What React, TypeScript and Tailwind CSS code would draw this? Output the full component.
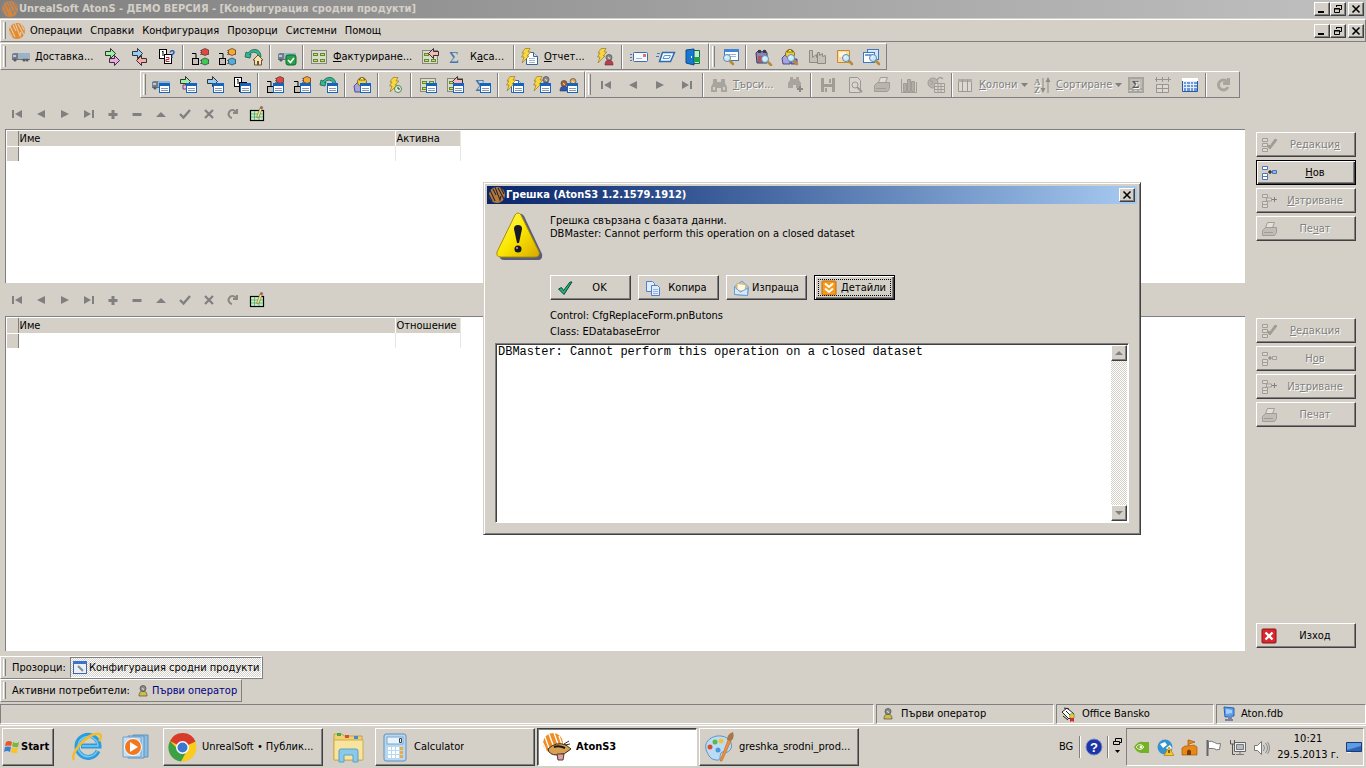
import React from 'react';
import clsx from 'clsx';

type IconProps = { w?: number; h?: number; box?: string; className?: string; children: React.ReactNode };

const RAISED = 'border border-t-white border-l-white border-r-[#404040] border-b-[#404040] shadow-[inset_-1px_-1px_0_#808080]';
const DEFAULT_BUTTON = 'border border-black shadow-[inset_1px_1px_0_#fff,inset_-1px_-1px_0_#404040,inset_-2px_-2px_0_#808080]';
const BAND = 'border border-t-white border-l-white border-r-[#808080] border-b-[#808080]';
const SUNKEN = 'border border-t-[#808080] border-l-[#808080] border-r-white border-b-white';
const DISABLED = 'text-[#808080] [text-shadow:1px_1px_0_#fff]';
const CHECKER = 'bg-[repeating-conic-gradient(#fff_0_25%,#d4d0c8_0_50%)] bg-[length:2px_2px]';

function Icon({ w = 20, h = 18, box, className, children }: IconProps) {
  return (
    <svg width={w} height={h} viewBox={box ?? `0 0 ${w} ${h}`} className={clsx('shrink-0', className)} aria-hidden="true">
      {children}
    </svg>
  );
}

/* ---------- icon parts, all on a 20x18 canvas ---------- */

const WinBadge = () => (
  <g>
    <rect x="8.5" y="7.5" width="10" height="9" fill="#fff" stroke="#1464c0" />
    <path d="M8 7h11v3H8z" fill="#1464c0" />
    <path d="M10 12.500h7M10 14.500h7" stroke="#8898b0" />
  </g>
);

const Truck = () => (
  <g>
    <rect x="7" y="4" width="12" height="7" fill="#9fb2c4" />
    <path d="M7 4.500h12" stroke="#c3d2de" />
    <path d="M1 6l2-1h4v6H1z" fill="#72808e" />
    <path d="M2 7h3v2H2z" fill="#b9c8d6" />
    <path d="M1 11.500h18" stroke="#68727c" />
    <circle cx="4" cy="12" r="1.600" fill="#555d66" />
    <circle cx="16" cy="12" r="1.600" fill="#555d66" />
    <circle cx="13" cy="12" r="1.600" fill="#555d66" />
  </g>
);

const ArrowR = ({ x, y, fill }: { x: number; y: number; fill: string }) => (
  <path transform={`translate(${x} ${y})`} d="M.5 3.500h5v-3l5 5-5 5v-3h-5z" fill={fill} stroke="#222" strokeWidth=".9" />
);

const ArrowL = ({ x, y, fill }: { x: number; y: number; fill: string }) => (
  <path transform={`translate(${x} ${y})`} d="M10.500 3.500h-5v-3l-5 5 5 5v-3h5z" fill={fill} stroke="#222" strokeWidth=".9" />
);

const Pages = () => (
  <g fill="#fff" stroke="#000">
    <rect x="2.500" y="1.500" width="7" height="9" />
    <path d="M5 4l1-1v5" fill="none" />
    <rect x="7.500" y="6.500" width="7" height="9" />
    <path d="M9 9.500h3v2H9v2h3.500" fill="none" stroke="#c02030" />
  </g>
);

const Balls = ({ top, bottom }: { top: string; bottom?: string }) => (
  <g>
    <path d="M2 5.500h4v5" fill="none" stroke="#000" />
    <rect x="2.500" y="10.500" width="6" height="6" fill="#c4c0b8" stroke="#000" />
    <path d="M10 2.500h9M10 4.500h9M10 6.500h9" stroke="#777" />
    <path d="M11.500 2l3.500-1.500L18.500 2v4L15 7.500 11.500 6z" fill={top} stroke="#603020" strokeWidth=".7" />
    {bottom && (
      <>
        <path d="M10 12.500h9M10 15.500h9" stroke="#777" />
        <path d="M11.500 11.500L15 10l3.500 1.500v4L15 17l-3.500-1.500z" fill={bottom} stroke="#204040" strokeWidth=".7" />
      </>
    )}
  </g>
);

const Undo = () => (
  <path d="M1 9l5 1 1-4-1.500.5C8 3 14 3 15 10l2-1C17 0 8-.5 4 5L2 4z" fill="#39b394" stroke="#12634c" strokeWidth=".8" />
);

const Form = () => (
  <g>
    <rect x="2.500" y="2.500" width="15" height="13" fill="#d9dcc8" stroke="#88887c" />
    <path d="M4 5h5v3H4zM11 5h5v3h-5zM4 11h5v3H4zM11 11h5v3h-5z" fill="#5a8a3c" />
    <path d="M5 6h3v1H5zM12 6h3v1h-3zM5 12h3v1H5zM12 12h3v1h-3z" fill="#e3d84c" />
  </g>
);

const Sigma = () => (
  <text x="3" y="15" fontSize="17" fontFamily="Liberation Serif, serif" fill="#3f78ac">Σ</text>
);

const Bolt = ({ x = 0, y = 0 }: { x?: number; y?: number }) => (
  <path transform={`translate(${x} ${y})`} d="M5 .5h5L8 4h3L7 8h2L2 15l2-6H1.500L4 5H2z" fill="#f7d83c" stroke="#9b7b2c" strokeWidth=".7" />
);

const Doc = () => (
  <g>
    <path d="M6.500 4.500h7l4 4v8h-11z" fill="#fff" stroke="#3c6492" />
    <path d="M13.500 4.500v4h4" fill="#cfe0f2" stroke="#3c6492" />
    <path d="M9 10.500h6M9 12.500h6M9 14.500h6" stroke="#9ab4d2" />
  </g>
);

const Person = ({ x = 0, y = 0, head = '#8b8b8b', body = '#c03a4c' }: { x?: number; y?: number; head?: string; body?: string }) => (
  <g transform={`translate(${x} ${y})`}>
    <path d="M0 11c0-4 2-5 4-5s4 1 4 5z" fill={body} stroke="#50303a" strokeWidth=".6" />
    <circle cx="4" cy="3.500" r="3" fill={head} stroke="#4a4a4a" strokeWidth=".7" />
    <path d="M3 3.500l2 1" stroke="#eee" />
  </g>
);

const Lens = ({ x = 8, y = 6 }: { x?: number; y?: number }) => (
  <g transform={`translate(${x} ${y})`}>
    <path d="M6 6l4 4" stroke="#b98a3c" strokeWidth="2.600" strokeLinecap="round" />
    <circle cx="4" cy="4" r="3.500" fill="#cdeafa" stroke="#5b8cb0" />
    <path d="M2.500 3.500l1.500-1" stroke="#fff" />
  </g>
);

const Drum = () => (
  <g stroke="#35307c" strokeWidth=".8">
    <path d="M2 10l4-4 4 3v7H3z" fill="#a9a4e0" />
    <circle cx="10" cy="6" r="4.500" fill="#f4d03a" stroke="#6d5410" />
    <path d="M7 4l3-3 3 3z" fill="#fff36a" stroke="#6d5410" />
    <path d="M11 11h6v5h-6z" fill="#8c88c6" />
  </g>
);

const ICONS: Record<string, React.ReactNode> = {
  truck: <Truck />,
  arrowsOut: <><ArrowR x={2} y={0} fill="#9cf0a4" /><ArrowR x={6} y={7} fill="#f0a8ec" /></>,
  arrowsSwap: <><ArrowR x={2} y={0} fill="#98ccf4" /><ArrowL x={6} y={7} fill="#f8aaaa" /></>,
  pagesAsk: <><Pages /><text x="12" y="10" fontSize="10" fontWeight="bold" fontFamily="Liberation Sans, sans-serif" fill="#1c4fa0">?</text></>,
  ballsRed: <Balls top="#e04848" bottom="#40c850" />,
  ballsOrange: <Balls top="#f4a830" bottom="#58a8e0" />,
  undoHome: <><Undo /><path d="M9 12l5-5 5 5h-1.500v5h-7v-5z" fill="#f6e2b0" stroke="#6c5230" /><path d="M13 13h2v4h-2z" fill="#6c5230" /></>,
  truckOk: <><Truck /><rect x="9" y="7" width="10" height="10" rx="2" fill="#27a049" stroke="#0b6c2a" /><path d="M11 12l2.500 2.500L17 10" fill="none" stroke="#fff" strokeWidth="1.600" /></>,
  form: <Form />,
  formBack: <><Form /><ArrowL x={8} y={0} fill="#f8b8b8" /></>,
  sigma: <Sigma />,
  boltDoc: <><Doc /><Bolt /></>,
  boltPerson: <><Bolt /><Person x={9} y={6} /></>,
  card: <><rect x="4.500" y="4.500" width="14" height="9" rx="1" fill="#f6faff" stroke="#3c6ca8" /><path d="M7 10.500h6" stroke="#a0b4cc" /><path d="M14 6h3v3h-3z" fill="#e07070" /><path d="M1 6.500h2M1 9.500h2M1 12.500h2" stroke="#5878a0" /></>,
  card2: <><path d="M6.500 4.500h12l-4 9h-11z" fill="#f6faff" stroke="#2c6cae" strokeWidth="1.500" /><path d="M8.500 7.500h6l-1.500 3H7z" fill="none" stroke="#5a96d0" /><path d="M1 5.500h3M0 8.500h3" stroke="#5878a0" /></>,
  door: <><path d="M8.500 2.500h8v13h-8z" fill="#bfeec8" stroke="#146c54" /><path d="M3 2l8-1v16l-8-2z" fill="#1878d0" stroke="#0c4a8c" /><path d="M11 9h6v5h-6z" fill="#22a048" /><path d="M8.500 8v2" stroke="#fff" /></>,
  winLens: <><rect x="4.500" y="1.500" width="14" height="11" fill="#fff" stroke="#3c74b8" /><path d="M4 1h15v3H4z" fill="#3f86d8" /><path d="M7 6.500h9M7 8.500h9" stroke="#9ab4d2" /><Lens x={3} y={6} /></>,
  bagLens: <><path d="M3 5l3-3 3 2 3-2 2 3v10H4z" fill="#8a86b4" stroke="#3a3860" /><path d="M5 2h3v3H5zM10 2h3v3h-3z" fill="#3c3c48" /><path d="M5 8h4v6H5z" fill="#b6545c" /><Lens x={8} y={7} /></>,
  drumLens: <><Drum /><Lens x={7} y={6} /></>,
  factory: <g fill="#c4c0b8" stroke="#8c8a84"><path d="M2.500 14.500v-12h3v7l4-3v3l4-3v8z" /><path d="M10.500 4.500h2v3l3-2v3l3-1v8h-8z" /></g>,
  docLens: <><path d="M3.500 2.500h12v12h-12z" fill="#fbd9a0" stroke="#c88830" /><path d="M5 4h7v5H5z" fill="#fff4dc" /><Lens x={8} y={6} /></>,
  copyLens: <><rect x="6.500" y="1.500" width="11" height="10" fill="#d8e8fa" stroke="#3c78c0" /><rect x="2.500" y="4.500" width="11" height="10" fill="#fff" stroke="#3c78c0" /><path d="M4 6h8v2H4z" fill="#6aa2e0" /><Lens x={8} y={6} /></>,
  wTruck: <><Truck /><WinBadge /></>,
  wArrow: <><ArrowR x={2} y={0} fill="#9cf0a4" /><path d="M5 9h4v4H5z" fill="#f0b8e8" stroke="#704070" /><WinBadge /></>,
  wArrow2: <><ArrowR x={2} y={0} fill="#98ccf4" /><WinBadge /></>,
  wPages: <><Pages /><WinBadge /></>,
  wRed: <><Balls top="#e04848" /><WinBadge /></>,
  wOrange: <><Balls top="#f4a830" /><WinBadge /></>,
  wUndo: <><Undo /><WinBadge /></>,
  wDrum: <><Drum /><WinBadge /></>,
  boltClock: <><Bolt x={3} y={1} /><circle cx="13" cy="13" r="3.500" fill="#dff0d8" stroke="#4f8a58" /><path d="M13 11v2h2" fill="none" stroke="#333" /></>,
  wForm: <><Form /><WinBadge /></>,
  wFormBack: <><Form /><ArrowL x={7} y={0} fill="#f8b8b8" /><WinBadge /></>,
  wSigma: <><Sigma /><WinBadge /></>,
  wBoltDoc: <><Doc /><Bolt /><WinBadge /></>,
  wBoltPerson: <><Bolt /><Person x={10} y={0} /><WinBadge /></>,
  wPeople: <><Person x={1} y={4} head="#a8602c" body="#2858b8" /><Person x={10} y={2} head="#e8a848" body="#c88838" /><WinBadge /></>,
  first: <path d="M5 5h2v8H5zM15 5v8L8 9z" fill="#808080" />,
  prev: <path d="M14 5v8L6 9z" fill="#808080" />,
  next: <path d="M6 5v8l8-4z" fill="#808080" />,
  last: <path d="M5 5v8l7-4zM13 5h2v8h-2z" fill="#808080" />,
  find: <g fill="#a8a59e"><path d="M4 3h4v3h4V3h4v4l2 4v5h-6v-4H8v4H2v-5l2-4z" /><path d="M4 11h2v3H4zM14 11h2v3h-2z" fill="#d4d0c8" /></g>,
  findMore: <g fill="#a8a59e"><path d="M5 1h3v2h3V1h3v3l2 3v5h-5V9H8v3H3V7l2-3z" /><path d="M14 10h2v2h2v2h-2v2h-2v-2h-2v-2h2z" fill="#8c8a84" /></g>,
  save: <g><path d="M3 2h14v14H3z" fill="#a09d96" /><path d="M6 2h8v6H6zM6 11h8v5H6z" fill="#d4d0c8" /><path d="M11 3h2v4h-2zM7 12h2v4H7z" fill="#a09d96" /></g>,
  preview: <g fill="#d8d5ce" stroke="#9c9992"><path d="M4.500 1.500h8l3 3v12h-11z" /><circle cx="10" cy="9" r="3" /><path d="M12 11l5 5" strokeWidth="2" /></g>,
  print: <g fill="#b8b5ae" stroke="#a09d96"><path d="M6.500 6.500l2-5h7l-2 5z" fill="#e0ddd6" /><path d="M2.500 9.500l3-3h12v6l-2 3h-13z" /><path d="M4 12.500h10" /></g>,
  chart: <g fill="#b0ada6" stroke="#a09d96"><path d="M4.500 7.500h3v8h-3zM8.500 3.500h3v12h-3zM12.500 5.500h3v10h-3z" /><path d="M2.500 3v13.500h15V6" fill="none" /></g>,
  globe: <g fill="#b8b5ae" stroke="#a09d96"><circle cx="7" cy="7" r="5" /><path d="M4 4l3 2-2 3" fill="none" /><path d="M8.500 7.500h10v9h-10z" fill="#d8d5ce" /><path d="M8.500 10.500h10M8.500 13.500h10M12 7.500v9M15 7.500v9" /><path d="M11 4c2-3 4-3 6-1" fill="none" strokeWidth="1.500" /></g>,
  columns: <g stroke="#9c9992" fill="#dcd9d2"><path d="M3.500 3.500h13v12h-13z" /><path d="M3 3h14v3H3z" fill="#b0ada6" stroke="none" /><path d="M7.500 3.500v12M12.500 3.500v12" /></g>,
  sort: <g fill="#8c8a84"><text x="2" y="9" fontSize="9" fontWeight="bold" fontFamily="Liberation Serif, serif">A</text><text x="2" y="17" fontSize="9" fontWeight="bold" fontFamily="Liberation Serif, serif">Z</text><path d="M10.500 2h1v10h2L11 17l-2.500-5h2zM15.500 17h1V6h2L16 1l-2.500 5h2z" /></g>,
  total: <g><path d="M2 1h16v16H2z" fill="#a8a59e" /><path d="M4 3h12v9H4z" fill="#c0bdb6" /><text x="6" y="12" fontSize="11" fontWeight="bold" fontFamily="Liberation Serif, serif" fill="#555">Σ</text><path d="M3 14.500h3M8 14.500h3M13 14.500h3" stroke="#d4d0c8" /></g>,
  bands: <g fill="none" stroke="#98958e"><path d="M2 3.500h16M3.500 1v5M9.500 1v5M15.500 1v5" /><path d="M3.500 8.500h12v8h-12zM3.500 12.500h12M9.500 8.500v8" fill="#dcd9d2" /></g>,
  grid: <g><path d="M2.500 3.500h15v12h-15z" fill="#e4eefb" stroke="#2c58a0" /><path d="M2 2h16v3H2z" fill="#fff" /><path d="M4 6h2v2H4zM7 6h3v2H7zM11 6h2v2h-2zM14 6h3v2h-3zM4 9h2v2H4zM7 9h3v2H7zM11 9h2v2h-2zM14 9h3v2h-3zM4 12h2v3H4zM7 12h3v3H7zM11 12h2v3h-2zM14 12h3v3h-3z" fill="#6a98d8" /></g>,
  refresh: <path d="M14.500 6A5 5 0 1 0 15 11M15.500 2v5.500H10" fill="none" stroke="#a8a59e" strokeWidth="3" />,
  plus: <path d="M8.500 5h3v3h3v3h-3v3h-3v-3h-3V8h3z" fill="#808080" />,
  minus: <path d="M5.500 8h9v3h-9z" fill="#808080" />,
  up: <path d="M5 12l5-5 5 5z" fill="#808080" />,
  check: <path d="M5 9l3.500 3.500L15 5" fill="none" stroke="#808080" strokeWidth="2.400" />,
  cross: <path d="M6 5l8 8M14 5l-8 8" fill="none" stroke="#808080" strokeWidth="2.200" />,
  reload: <path d="M13 7a4 4 0 1 0-4 6M14 4v4h-4" fill="none" stroke="#8a8882" strokeWidth="2" />,
  editGrid: <g><rect x="3.500" y="5.500" width="13" height="10" fill="#c8f0c8" stroke="#000" strokeWidth="1.200" /><path d="M4 9h12M4 12h12M7.500 6v9M12 6v9" stroke="#4c9c5c" strokeWidth=".7" /><path d="M10 11l3-8 2 1-3 8-2 1z" fill="#f4e88c" stroke="#7c6c30" strokeWidth=".6" /><circle cx="14.500" cy="2.500" r="1.600" fill="#a06868" /></g>,
};

function Logo({ fill = '#ea8a26', lines = '#d4d0c8' }: { fill?: string; lines?: string }) {
  return (
    <Icon w={16} h={16}>
      <circle cx="8" cy="8" r="8" fill={fill} />
      <path d="M1 3l5 11M4 2l3 6M6 0l5 13 1-4M9 1l6 11M12 1l3 6M0 8l3 6" fill="none" stroke={lines} strokeWidth="1.100" />
    </Icon>
  );
}

function ToolButton({ icon, label, disabled, className }: { icon: string; label?: string; disabled?: boolean; className?: string }) {
  return (
    <button
      type="button"
      aria-label={label?.replace('&', '') ?? icon}
      disabled={disabled}
      className={clsx('flex h-6 shrink-0 items-center', className ?? 'w-[27px] justify-center', disabled && DISABLED)}
    >
      <Icon>{ICONS[icon]}</Icon>
      {label && (
        <span className="ml-1 whitespace-nowrap pt-px">
          <Accel text={label} />
        </span>
      )}
    </button>
  );
}

// "&" stands before the underlined access key
function Accel({ text }: { text: string }) {
  const i = text.indexOf('&');
  if (i < 0) return <>{text}</>;
  return (
    <>
      {text.slice(0, i)}
      <span className="underline underline-offset-1">{text[i + 1]}</span>
      {text.slice(i + 2)}
    </>
  );
}

const Sep = () => <div className="mx-0.5 h-6 w-0.5 shrink-0 border-l border-l-[#808080] border-r border-r-white" />;
const Grip = () => <div className="my-0.5 ml-0.5 mr-px w-[3px] shrink-0 self-stretch border-l border-l-white border-r border-r-[#808080]" />;
const Caret = () => <Icon w={7} h={4}><path d="M0 0h7L3.500 4z" fill="#808080" /></Icon>;

function WindowControls() {
  const button = clsx('flex h-3.5 w-4 items-center justify-center bg-[#d4d0c8]', RAISED);
  return (
    <div className="ml-auto flex">
      <button type="button" aria-label="Minimize" className={button}>
        <Icon w={10} h={10}><path d="M1 7h6v2H1z" /></Icon>
      </button>
      <button type="button" aria-label="Restore" className={button}>
        <Icon w={10} h={10}><path d="M3.500 3V1.500h5v4H7M3 1.500h6M1.500 4.500h5v4h-5zM1 5h6" fill="none" stroke="#000" /></Icon>
      </button>
      <button type="button" aria-label="Close" className={clsx(button, 'ml-0.5')}>
        <Icon w={10} h={10}><path d="M1.500 1.500l7 7M8.500 1.500l-7 7" stroke="#000" strokeWidth="1.600" /></Icon>
      </button>
    </div>
  );
}

function Navigator({ className }: { className?: string }) {
  const items = ['first', 'prev', 'next', 'last', 'plus', 'minus', 'up', 'check', 'cross', 'reload', 'editGrid'];
  return (
    <div className={clsx('flex items-center pl-[5px]', className)}>
      {items.map((name) => (
        <button key={name} type="button" aria-label={name} disabled={name !== 'editGrid'} className="flex w-6 justify-center">
          <Icon>{ICONS[name]}</Icon>
        </button>
      ))}
    </div>
  );
}

function DataGrid({ second, className }: { second: string; className?: string }) {
  return (
    <div className={clsx('ml-[5px] border-l border-t border-[#808080] bg-white pl-px pt-px', className)}>
      <table className="table-fixed border-collapse text-left leading-[14px]">
        <thead>
          <tr className="h-[15px]">
            <th aria-label="Row" className="w-[11px] border-b border-r border-b-white border-r-[#808080] bg-[#d4d0c8] p-0" />
            <th className="w-[377px] border-r border-white bg-[#d4d0c8] p-0 pl-px font-normal">Име</th>
            <th className="w-[65px] border-r border-[#e8e6e0] bg-[#d4d0c8] p-0 pl-px font-normal">{second}</th>
          </tr>
        </thead>
        <tbody>
          <tr className="h-[15px]">
            <td className="border-r border-[#808080] bg-[#d4d0c8]" />
            <td className="border-r border-[#e8e6e0]" />
            <td className="border-r border-[#e8e6e0]" />
          </tr>
        </tbody>
      </table>
    </div>
  );
}

const SIDE_ICONS: Record<string, React.ReactNode> = {
  edit: <g fill="#dcd9d2" stroke="#a09d96"><path d="M1.500 1.500h5v3h-5zM1.500 6.500h5v3h-5zM1.500 11.500h5v3h-5z" /><path d="M6 9l3 3 7-9-2-1-5 7-1-1z" fill="#a09d96" /></g>,
  add: <g fill="#fff" stroke="#4a74b4"><path d="M1.500 1.500h5v3h-5zM1.500 8.500h5v3h-5zM1.500 11.500h5v3h-5z" /><path d="M11.500 5.500h4v3h-4z" fill="#8ab4ec" /><path d="M7 7h4M9 5v4" stroke="#000" /></g>,
  addOff: <g fill="#dcd9d2" stroke="#a09d96"><path d="M1.500 1.500h5v3h-5zM1.500 8.500h5v3h-5zM1.500 11.500h5v3h-5z" /><path d="M11.500 5.500h4v3h-4z" /><path d="M7 7h4M9 5v4" stroke="#808080" /></g>,
  remove: <g fill="#dcd9d2" stroke="#a09d96"><path d="M1.500 1.500h5v3h-5zM1.500 8.500h5v3h-5zM1.500 11.500h5v3h-5z" /><path d="M5.500 5h5v3h-5z" /><path d="M11 6.500h5M13.500 4v5" stroke="#808080" /></g>,
  print: <g fill="#c0bdb6" stroke="#a09d96"><path d="M4.500 6.500l2-5h7l-2 5z" fill="#e4e1da" /><path d="M1.500 9.500l3-3h11v5l-2 3h-12z" /><path d="M3 11.500h9" /></g>,
  exit: <g><rect x="1" y="1" width="14" height="14" rx="1" fill="#d8282c" stroke="#8c1418" /><path d="M4.500 4.500l7 7M11.500 4.500l-7 7" stroke="#fff" strokeWidth="2.400" /></g>,
};

function SideButton({ icon, label, disabled, primary }: { icon: string; label: string; disabled?: boolean; primary?: boolean }) {
  return (
    <button
      type="button"
      disabled={disabled}
      className={clsx('flex h-[25px] w-[100px] items-center px-1', primary ? DEFAULT_BUTTON : RAISED, disabled && DISABLED)}
    >
      <Icon w={16} h={16}>{SIDE_ICONS[icon]}</Icon>
      <span className="flex-1 pl-0.5 pt-0.5 text-center"><Accel text={label} /></span>
    </button>
  );
}

function DialogButton({ label, primary, children }: { label: string; primary?: boolean; children: React.ReactNode }) {
  return (
    <button type="button" className={clsx('relative flex h-[25px] w-[81px] items-center px-1.5', primary ? DEFAULT_BUTTON : RAISED)}>
      <Icon w={16} h={16}>{children}</Icon>
      <span className="flex-1 pl-0.5 pt-0.5 text-center">{label}</span>
      {primary && <span className="absolute inset-[3px] border border-dotted border-black" />}
    </button>
  );
}

function ErrorDialog() {
  return (
    <div role="dialog" aria-label="Грешка" className="absolute left-[483px] top-[182px] w-[658px] border border-[#d4d0c8] border-b-[#404040] border-r-[#404040] bg-[#d4d0c8] shadow-[inset_1px_1px_0_#fff,inset_-1px_-1px_0_#808080]">
      <div className="m-[3px] flex h-[18px] items-center bg-linear-to-r from-[#0a246a] to-[#a6caf0] pl-0.5 font-bold text-white">
        <Logo lines="#20283c" fill="#b87838" />
        <span className="ml-px pt-px">Грешка (AtonS3 1.2.1579.1912)</span>
        <button type="button" aria-label="Close" className={clsx('ml-auto mr-0.5 flex h-3.5 w-4 items-center justify-center bg-[#d4d0c8]', RAISED)}>
          <Icon w={10} h={10}><path d="M1.500 1.500l7 7M8.500 1.500l-7 7" stroke="#000" strokeWidth="1.600" /></Icon>
        </button>
      </div>

      <div className="flex gap-[7px] px-3 pt-[5px]">
        <Icon w={47} h={48}>
          <defs>
            <linearGradient id="warn" x1="0" y1="0" x2="1" y2="1">
              <stop offset="0" stopColor="#fffc70" />
              <stop offset=".5" stopColor="#fbe600" />
              <stop offset="1" stopColor="#d8a800" />
            </linearGradient>
          </defs>
          <path d="M22 3q3-3 6 1l18 38q1 6-4 6H8q-5 0-4-5z" fill="#3c3c64" opacity=".8" />
          <path d="M19 3q3-4 6 0l18 37q1 5-4 5H5q-5 0-4-5z" fill="url(#warn)" stroke="#a89000" />
          <path d="M18 17q0-4 4-4t4 4l-3 14h-2z" fill="#181828" />
          <circle cx="22" cy="37" r="3.500" fill="#181828" />
          <circle cx="21" cy="36" r="1" fill="#aab" />
        </Icon>
        <div className="flex flex-col">
          <p className="mt-0.5 h-[61px] leading-[13px]">
            Грешка свързана с базата данни.
            <br />
            DBMaster: Cannot perform this operation on a closed dataset
          </p>
          <div className="flex gap-[7px]">
            <DialogButton label="OK">
              <path d="M1.500 9l3-1.500 2 3L13 2h2L7 14.500z" fill="#22b07c" stroke="#084c34" />
            </DialogButton>
            <DialogButton label="Копира">
              <g fill="#e0ecfc" stroke="#5480c4"><path d="M1.500 1.500h6l2 2v8h-8z" /><path d="M6.500 5.500h6l2 2v8h-8z" /></g>
              <path d="M8 9.500h5M8 11.500h5M8 13.500h5" stroke="#94b4e4" />
            </DialogButton>
            <DialogButton label="Изпраща">
              <path d="M1.500 6.500L9 1l6.500 6-1 8.500-13-1z" fill="#a8d0f4" stroke="#6c9cd0" />
              <path d="M4 3.500l9 1-1 7-8-1z" fill="#fff8dc" stroke="#d8b060" />
              <path d="M1.500 7l6 5 7.500-4-.5 7.500-13-1z" fill="#d4e8fa" stroke="#6c9cd0" />
            </DialogButton>
            <DialogButton label="Детайли" primary>
              <rect x="1" y="1" width="14" height="14" rx="1" fill="#f49a1c" stroke="#c46c08" />
              <path d="M4 3.500l4 3.500 4-3.500M4 8.500l4 3.500 4-3.500" fill="none" stroke="#fff" strokeWidth="2" />
            </DialogButton>
          </div>
          <p className="mt-2 leading-4">
            Control: CfgReplaceForm.pnButons
            <br />
            Class: EDatabaseError
          </p>
        </div>
      </div>

      <div className={clsx('mx-[11px] mb-[11px] mt-[3px] flex h-[180px] bg-white shadow-[inset_1px_1px_0_#404040]', SUNKEN)}>
        <textarea
          readOnly
          aria-label="Details"
          defaultValue="DBMaster: Cannot perform this operation on a closed dataset"
          className="flex-1 resize-none overflow-hidden pl-0.5 pt-px font-['Liberation_Mono',monospace] text-[12px] leading-[14px] outline-none"
        />
        <div className={clsx('my-px mr-px flex w-4 flex-col justify-between', CHECKER)}>
          <button type="button" aria-label="Scroll up" className={clsx('flex h-4 items-center justify-center bg-[#d4d0c8]', RAISED)}>
            <Icon w={8} h={4}><path d="M0 4l4-4 4 4z" fill="#808080" /></Icon>
          </button>
          <button type="button" aria-label="Scroll down" className={clsx('flex h-4 items-center justify-center bg-[#d4d0c8]', RAISED)}>
            <Icon w={8} h={4}><path d="M0 0h8L4 4z" fill="#808080" /></Icon>
          </button>
        </div>
      </div>
    </div>
  );
}

function TaskButton({ label, active, children }: { label: string; active?: boolean; children: React.ReactNode }) {
  return (
    <button
      type="button"
      className={clsx(
        'flex h-[38px] w-40 shrink-0 items-center gap-[5px] px-1',
        active ? 'border border-b-white border-l-[#404040] border-r-white border-t-[#404040] bg-white font-bold shadow-[inset_1px_1px_0_#808080]' : RAISED,
      )}
    >
      {children}
      <span className="truncate pt-px">{label}</span>
    </button>
  );
}

function Taskbar() {
  return (
    <footer className="mt-px flex h-[43px] items-center border-t border-white bg-[#d4d0c8] pl-0.5">
      <button type="button" className={clsx('flex h-[38px] w-[52px] items-center gap-px pl-px font-bold', RAISED)}>
        <Icon w={16} h={16}>
          <path d="M2 3q3-2 6 0L7 7Q4 6 1 7z" fill="#e8582c" />
          <path d="M9 3q3 2 6 0l-1 5q-3 1-6-1z" fill="#78b83c" />
          <path d="M1 8q3-1 6 0l-1 5q-3-2-6 0z" fill="#3c80d0" />
          <path d="M8 8q3 2 6 1l-1 5q-3 1-6-1z" fill="#f8c428" />
        </Icon>
        <span className="pt-px">Start</span>
      </button>
      <button type="button" aria-label="Internet Explorer" className="ml-[17px]">
        <Icon w={32} h={32}>
          <path d="M27 20a11 11 0 1 1 1-5H10" fill="none" stroke="#2c9cdc" strokeWidth="5" />
          <path d="M26 20a10 10 0 1 1 1-5H11" fill="none" stroke="#78ccf4" strokeWidth="1.500" />
          <path d="M3 29C-2 22 18 1 28 3q4 1 0 7" fill="none" stroke="#f4bc28" strokeWidth="2.500" />
        </Icon>
      </button>
      <button type="button" aria-label="Media Player" className="ml-[18px]">
        <Icon w={30} h={30}>
          <path d="M12 3h15v22H12z" fill="#8cbce0" stroke="#5c94c0" />
          <path d="M7 4h16v22H7z" fill="#a8d0ec" stroke="#5c94c0" />
          <path d="M2 5h18v20H2z" fill="#c4e0f4" stroke="#6ca0cc" />
          <circle cx="12" cy="15" r="8.500" fill="#f07820" stroke="#fff" />
          <path d="M9 10l8 5-8 5z" fill="#fff" />
        </Icon>
      </button>
      <div className="ml-3 flex items-center gap-0.5">
        <TaskButton label="UnrealSoft • Публик...">
          <Icon w={29} h={29}>
            <circle cx="14.500" cy="14.500" r="14" fill="#f8cc20" />
            <path d="M14.500 14.500L2 8A14 14 0 0 1 27.500 8.500z" fill="#d83a2c" />
            <path d="M2 8a14 14 0 0 0 11 20.500l6-11-9-1z" fill="#3ca048" />
            <circle cx="14.500" cy="14.500" r="6.500" fill="#fff" />
            <circle cx="14.500" cy="14.500" r="5" fill="#3a78d0" />
          </Icon>
        </TaskButton>
        <button type="button" aria-label="Explorer" className="mx-[7px]">
          <Icon w={34} h={32}>
            <path d="M2 3h8l2 2h18v24H2z" fill="#f0d070" stroke="#c8a040" />
            <path d="M5 2h4v3H5z" fill="#48a848" />
            <path d="M13 4h4v3h-4z" fill="#d85030" />
            <path d="M22 5h4v3h-4z" fill="#4888d0" />
            <path d="M2 9h29v20H2z" fill="#f8e49c" stroke="#d0ac50" />
            <path d="M7 31V20q0-2 2-2h15q2 0 2 2v11h-5v-7h-9v7z" fill="#8cc8e8" stroke="#58a0cc" />
          </Icon>
        </button>
        <TaskButton label="Calculator">
          <Icon w={29} h={29}>
            <rect x="4" y="1" width="22" height="27" rx="2" fill="#b8d8f0" stroke="#6090bc" />
            <rect x="7" y="4" width="16" height="7" fill="#e8f4fc" stroke="#7ca4c8" />
            <path d="M19.500 5.500h2v4h-2z" fill="none" stroke="#345" />
            <path d="M8 15.500h15M8 19.500h15M8 23.500h15" stroke="#fff" strokeWidth="3" strokeDasharray="3 1" />
            <path d="M20 15.500h3M20 19.500h3M20 23.500h3" stroke="#f0a840" strokeWidth="3" />
          </Icon>
        </TaskButton>
        <TaskButton label="AtonS3" active>
          <Icon w={29} h={30}>
            <circle cx="11" cy="11" r="10" fill="#f08c24" />
            <path d="M3 5l5 14M7 2l6 16M12 1l5 14M17 4l3 9M1 11l3 7" stroke="#fff" strokeWidth="1.300" />
            <path d="M6 17q8-8 18-4l5 4q-6 6-14 6T6 17z" fill="#d8a050" stroke="#3c2c18" />
            <path d="M12 15q5-2 11 1" fill="none" stroke="#181818" strokeWidth="2" />
            <path d="M22 12l5-3M23 13l5-1" stroke="#333" />
            <path d="M15 22l1 6h5l1-6z" fill="#e0a0a0" stroke="#503838" />
          </Icon>
        </TaskButton>
        <TaskButton label="greshka_srodni_prod...">
          <Icon w={30} h={30}>
            <path d="M3 20C-2 10 8 3 17 4s13 9 9 14-7 0-9 3 1 8-5 7-7-4-9-8z" fill="#bcdcf4" stroke="#5c94c4" />
            <circle cx="6" cy="15" r="2.500" fill="#e04838" />
            <circle cx="11" cy="10" r="2.500" fill="#58b848" />
            <circle cx="17" cy="9" r="2.500" fill="#f4c038" />
            <circle cx="14" cy="18" r="2.500" fill="#4c98dc" />
            <path d="M16 29l8-21 3 1-9 20z" fill="#f09038" stroke="#b86820" strokeWidth=".6" />
            <path d="M23 8q0-6 6-8 2 6-2 9z" fill="#a87848" />
          </Icon>
        </TaskButton>
      </div>

      <div className="ml-auto flex items-center">
        <span>BG</span>
        <div className="ml-1.5 h-[22px] w-0.5 border-l border-l-[#808080] border-r border-r-white" />
        <button type="button" aria-label="Help" className="ml-1">
          <Icon w={18} h={18}>
            <circle cx="9" cy="9" r="8" fill="#1c34a8" stroke="#7c8cc8" />
            <text x="5" y="14" fontSize="13" fontWeight="bold" fontFamily="Liberation Sans, sans-serif" fill="#fff">?</text>
          </Icon>
        </button>
        <div className="ml-1 h-[22px] w-0.5 border-l border-l-[#808080] border-r border-r-white" />
        <Icon w={9} h={18} className="mx-1">
          <path d="M2.500 3V.5h6v4H7M.5 3.500h6v3h-6z" fill="none" stroke="#000" />
          <path d="M2 12h5l-2.500 3z" />
        </Icon>
        <div className={clsx('mr-0.5 flex h-[38px] items-center gap-[7px] pl-1.5 pr-px', SUNKEN)}>
          <Icon w={17} h={17}>
            <path d="M1 8q4-6 9-5h6v11H8q-5-1-7-6z" fill="#76b028" />
            <path d="M3 8q4-5 8 0-4 5-8 0z" fill="none" stroke="#e0f0c0" />
            <circle cx="8" cy="8" r="1.500" fill="#fff" />
          </Icon>
          <Icon w={17} h={17}>
            <circle cx="8" cy="8" r="7.500" fill="#3494d0" />
            <path d="M3 5l5-2 2 3-4 3zM9 9l4-3 2 3-3 4z" fill="#fff" />
            <path d="M12 8l5 8.500H7z" fill="#f8c430" stroke="#b07c10" strokeWidth=".7" />
            <path d="M12 11v3" stroke="#000" />
          </Icon>
          <Icon w={17} h={17}>
            <path d="M1 9l3-2h3V1h1l6 2-6 2v2l5-1 3 2v8H1z" fill="#e88818" stroke="#a85808" strokeWidth=".7" />
            <path d="M6 16v-4q2-3 4 0v4z" fill="#7c3c08" />
          </Icon>
          <Icon w={17} h={17}>
            <path d="M2.500 1v16" stroke="#666" strokeWidth="2" />
            <path d="M3.500 2.500q3-1 6 1t6 1l-1 6q-3 1-6-1h-5z" fill="#fff" stroke="#777" />
          </Icon>
          <Icon w={17} h={17}>
            <path d="M5.500 3.500h11v9h-11z" fill="#f0f0f0" stroke="#666" />
            <path d="M7.500 5.500h7v5h-7zM7 15.500h8M11 13v2" fill="#b8bcc0" stroke="#777" />
            <path d="M1.500 1v4h4V1M3.500 5v10.500H6" fill="none" stroke="#555" />
          </Icon>
          <Icon w={17} h={17}>
            <path d="M1.500 6.500h3l4-4v13l-4-4h-3z" fill="#fff" stroke="#777" />
            <path d="M10.500 6q2 3 0 6M12.500 4q4 5 0 10M14.500 3q4 6 0 12" fill="none" stroke="#888" />
          </Icon>
          <div className="text-center leading-4">
            <div>10:21</div>
            <div>29.5.2013 г.</div>
          </div>
          <Icon w={16} h={15}>
            <path d="M.5 2.500h15v9H.5z" fill="#2c64b8" stroke="#1c3c70" />
            <path d="M1 3h14v3L1 10z" fill="#5c9ce4" />
            <path d="M1 12h4v1H1z" fill="#fff" />
          </Icon>
        </div>
      </div>
    </footer>
  );
}

export default function App() {
  return (
    <div className="relative flex min-h-screen flex-col overflow-hidden bg-[#d4d0c8] font-['DejaVu_Sans_Condensed','DejaVu_Sans',sans-serif] text-[11px] text-black">
      <header className="flex h-[18px] items-center bg-linear-to-r from-[#808080] to-[#c0c0c0] pl-0.5 pr-0.5 font-bold text-[#d4d0c8]">
        <Logo lines="#888" fill="#d8843a" />
        <h1 className="ml-px">UnrealSoft AtonS - ДЕМО ВЕРСИЯ - [Конфигурация сродни продукти]</h1>
        <WindowControls />
      </header>

      <nav className={clsx('mt-px flex h-[23px] items-center pr-px', BAND)}>
        <Grip />
        <div className="ml-0.5"><Logo /></div>
        <div className="ml-[5px] flex gap-2 pt-0.5">
          {['Операции', 'Справки', 'Конфигурация', 'Прозорци', 'Системни', 'Помощ'].map((item) => (
            <button key={item} type="button">{item}</button>
          ))}
        </div>
        <WindowControls />
      </nav>

      {/* Main toolbar */}
      <div className="mt-px flex">
        <div className={clsx('flex h-[27px] w-[709px] items-center', BAND)}>
          <Grip />
          <ToolButton icon="truck" label="&Доставка..." className="w-[92px] pl-1" />
          <ToolButton icon="arrowsOut" />
          <ToolButton icon="arrowsSwap" />
          <ToolButton icon="pagesAsk" />
          <Sep />
          <ToolButton icon="ballsRed" />
          <ToolButton icon="ballsOrange" />
          <ToolButton icon="undoHome" />
          <Sep />
          <ToolButton icon="truckOk" />
          <Sep />
          <ToolButton icon="form" label="&Фактуриране..." className="w-[110px] pl-[3px]" />
          <ToolButton icon="formBack" />
          <ToolButton icon="sigma" label="К&аса..." className="w-[68px] pl-[3px]" />
          <Sep />
          <ToolButton icon="boltDoc" label="&Отчет..." className="w-[75px] pl-[3px]" />
          <ToolButton icon="boltPerson" />
          <Sep />
          <ToolButton icon="card" />
          <ToolButton icon="card2" />
          <ToolButton icon="door" />
        </div>
        <div className={clsx('flex h-[27px] w-[178px] items-center', BAND)}>
          <Grip />
          <ToolButton icon="winLens" />
          <Sep />
          <ToolButton icon="bagLens" />
          <ToolButton icon="drumLens" />
          <ToolButton icon="factory" disabled />
          <ToolButton icon="docLens" />
          <ToolButton icon="copyLens" />
        </div>
      </div>

      {/* Window toolbar and grid toolbar */}
      <div className="mt-px flex pl-[140px]">
        <div className={clsx('flex h-[27px] w-[445px] items-center', BAND)}>
          <Grip />
          <ToolButton icon="wTruck" />
          <ToolButton icon="wArrow" />
          <ToolButton icon="wArrow2" />
          <ToolButton icon="wPages" />
          <Sep />
          <ToolButton icon="wRed" />
          <ToolButton icon="wOrange" />
          <ToolButton icon="wUndo" />
          <Sep />
          <ToolButton icon="wDrum" />
          <Sep />
          <ToolButton icon="boltClock" />
          <Sep />
          <ToolButton icon="wForm" />
          <ToolButton icon="wFormBack" />
          <ToolButton icon="wSigma" />
          <Sep />
          <ToolButton icon="wBoltDoc" />
          <ToolButton icon="wBoltPerson" />
          <ToolButton icon="wPeople" />
        </div>
        <div className={clsx('flex h-[27px] w-[655px] items-center', BAND)}>
          <Grip />
          <ToolButton icon="first" disabled />
          <ToolButton icon="prev" disabled />
          <ToolButton icon="next" disabled />
          <ToolButton icon="last" disabled />
          <Sep />
          <ToolButton icon="find" label="&Търси..." disabled className="w-[75px] pl-[3px]" />
          <ToolButton icon="findMore" disabled />
          <Sep />
          <ToolButton icon="save" disabled />
          <ToolButton icon="preview" disabled />
          <ToolButton icon="print" disabled />
          <ToolButton icon="chart" disabled />
          <ToolButton icon="globe" disabled />
          <Sep />
          <ToolButton icon="columns" label="&Колони" disabled className="w-[66px]" />
          <Caret />
          <ToolButton icon="sort" label="&Сортиране" disabled className="ml-1 w-[83px]" />
          <Caret />
          <ToolButton icon="total" disabled />
          <ToolButton icon="bands" disabled />
          <ToolButton icon="grid" />
          <Sep />
          <ToolButton icon="refresh" disabled />
        </div>
      </div>

      <main className="flex flex-1 flex-col">
        <section className="flex">
          <div className="flex-1">
            <Navigator className="h-[31px]" />
            <DataGrid second="Активна" className="h-[154px]" />
          </div>
          <aside className="flex flex-col gap-[3px] pl-[11px] pr-[10px] pt-[34px]">
            <SideButton icon="edit" label="Редакци&я" disabled />
            <SideButton icon="add" label="&Нов" primary />
            <SideButton icon="remove" label="&Изтриване" disabled />
            <SideButton icon="print" label="Пе&чат" disabled />
          </aside>
        </section>
        <section className="flex flex-1">
          <div className="flex flex-1 flex-col">
            <Navigator className="h-[33px]" />
            <DataGrid second="Отношение" className="flex-1" />
          </div>
          <aside className="flex flex-col gap-[3px] pb-[3px] pl-[11px] pr-[10px] pt-[35px]">
            <SideButton icon="edit" label="&Редакция" disabled />
            <SideButton icon="addOff" label="Н&ов" disabled />
            <SideButton icon="remove" label="Из&триване" disabled />
            <SideButton icon="print" label="Печат" disabled />
            <div className="mt-auto">
              <SideButton icon="exit" label="Изход" />
            </div>
          </aside>
        </section>
      </main>

      {/* Open windows and active users */}
      <div className="mt-[5px] flex flex-col items-start">
        <div className={clsx('flex h-[23px] items-center', BAND)}>
          <Grip />
          <span className="w-[63px] pl-[5px] pt-px">Прозорци:</span>
          <button type="button" className={clsx('flex h-[21px] items-center gap-0.5 px-0.5', SUNKEN, CHECKER)}>
            <Icon w={14} h={14}>
              <rect x=".5" y=".5" width="13" height="12" fill="#e8f0fa" stroke="#3c68b0" />
              <path d="M0 0h14v3H0z" fill="#3c74cc" />
              <path d="M5 5l5 5" stroke="#888" strokeWidth="2" />
            </Icon>
            <span className="pt-px">Конфигурация сродни продукти</span>
          </button>
        </div>
        <div className={clsx('flex h-[23px] items-center pr-1', BAND)}>
          <Grip />
          <span className="pl-[5px] pt-px">Активни потребители:</span>
          <Icon w={10} h={14} className="ml-2 mr-1"><Person x={1} y={1} body="#c8c040" /></Icon>
          <a href="#user" className="pt-px text-[#000080]">Първи оператор</a>
        </div>
      </div>

      <div className="mt-0.5 flex h-5 gap-0.5 leading-[18px]">
        <div className={clsx('flex-1', SUNKEN)} />
        <div className={clsx('flex w-[178px] items-center gap-2 pl-1.5', SUNKEN)}>
          <Icon w={10} h={14}><Person x={1} y={1} body="#c8c040" /></Icon>
          Първи оператор
        </div>
        <div className={clsx('flex w-[158px] items-center gap-[5px] pl-1', SUNKEN)}>
          <Icon w={16} h={16}>
            <path d="M1 6l5-4 7 6-5 5z" fill="#fff" stroke="#222" />
            <path d="M3 2l5 1M2 10l5 4M5 5l4 4" stroke="#222" />
            <circle cx="11" cy="10" r="2.500" fill="#d8d030" stroke="#777" strokeWidth=".6" />
            <path d="M9 12h4v4l-2-1-2 1z" fill="#d02c2c" />
          </Icon>
          Office Bansko
        </div>
        <div className={clsx('flex w-[150px] items-center gap-[5px] pl-1', SUNKEN)}>
          <Icon w={15} h={16}>
            <path d="M3 1l10 1v8l-9 1z" fill="#5ca0ec" stroke="#2c60b0" />
            <path d="M5 3l6 1v3l-6 1z" fill="#a4d0fc" />
            <path d="M7 10h4v3H7zM4 13h8v2H4z" fill="#7884a8" />
          </Icon>
          Aton.fdb
        </div>
      </div>

      <Taskbar />
      <ErrorDialog />
    </div>
  );
}
